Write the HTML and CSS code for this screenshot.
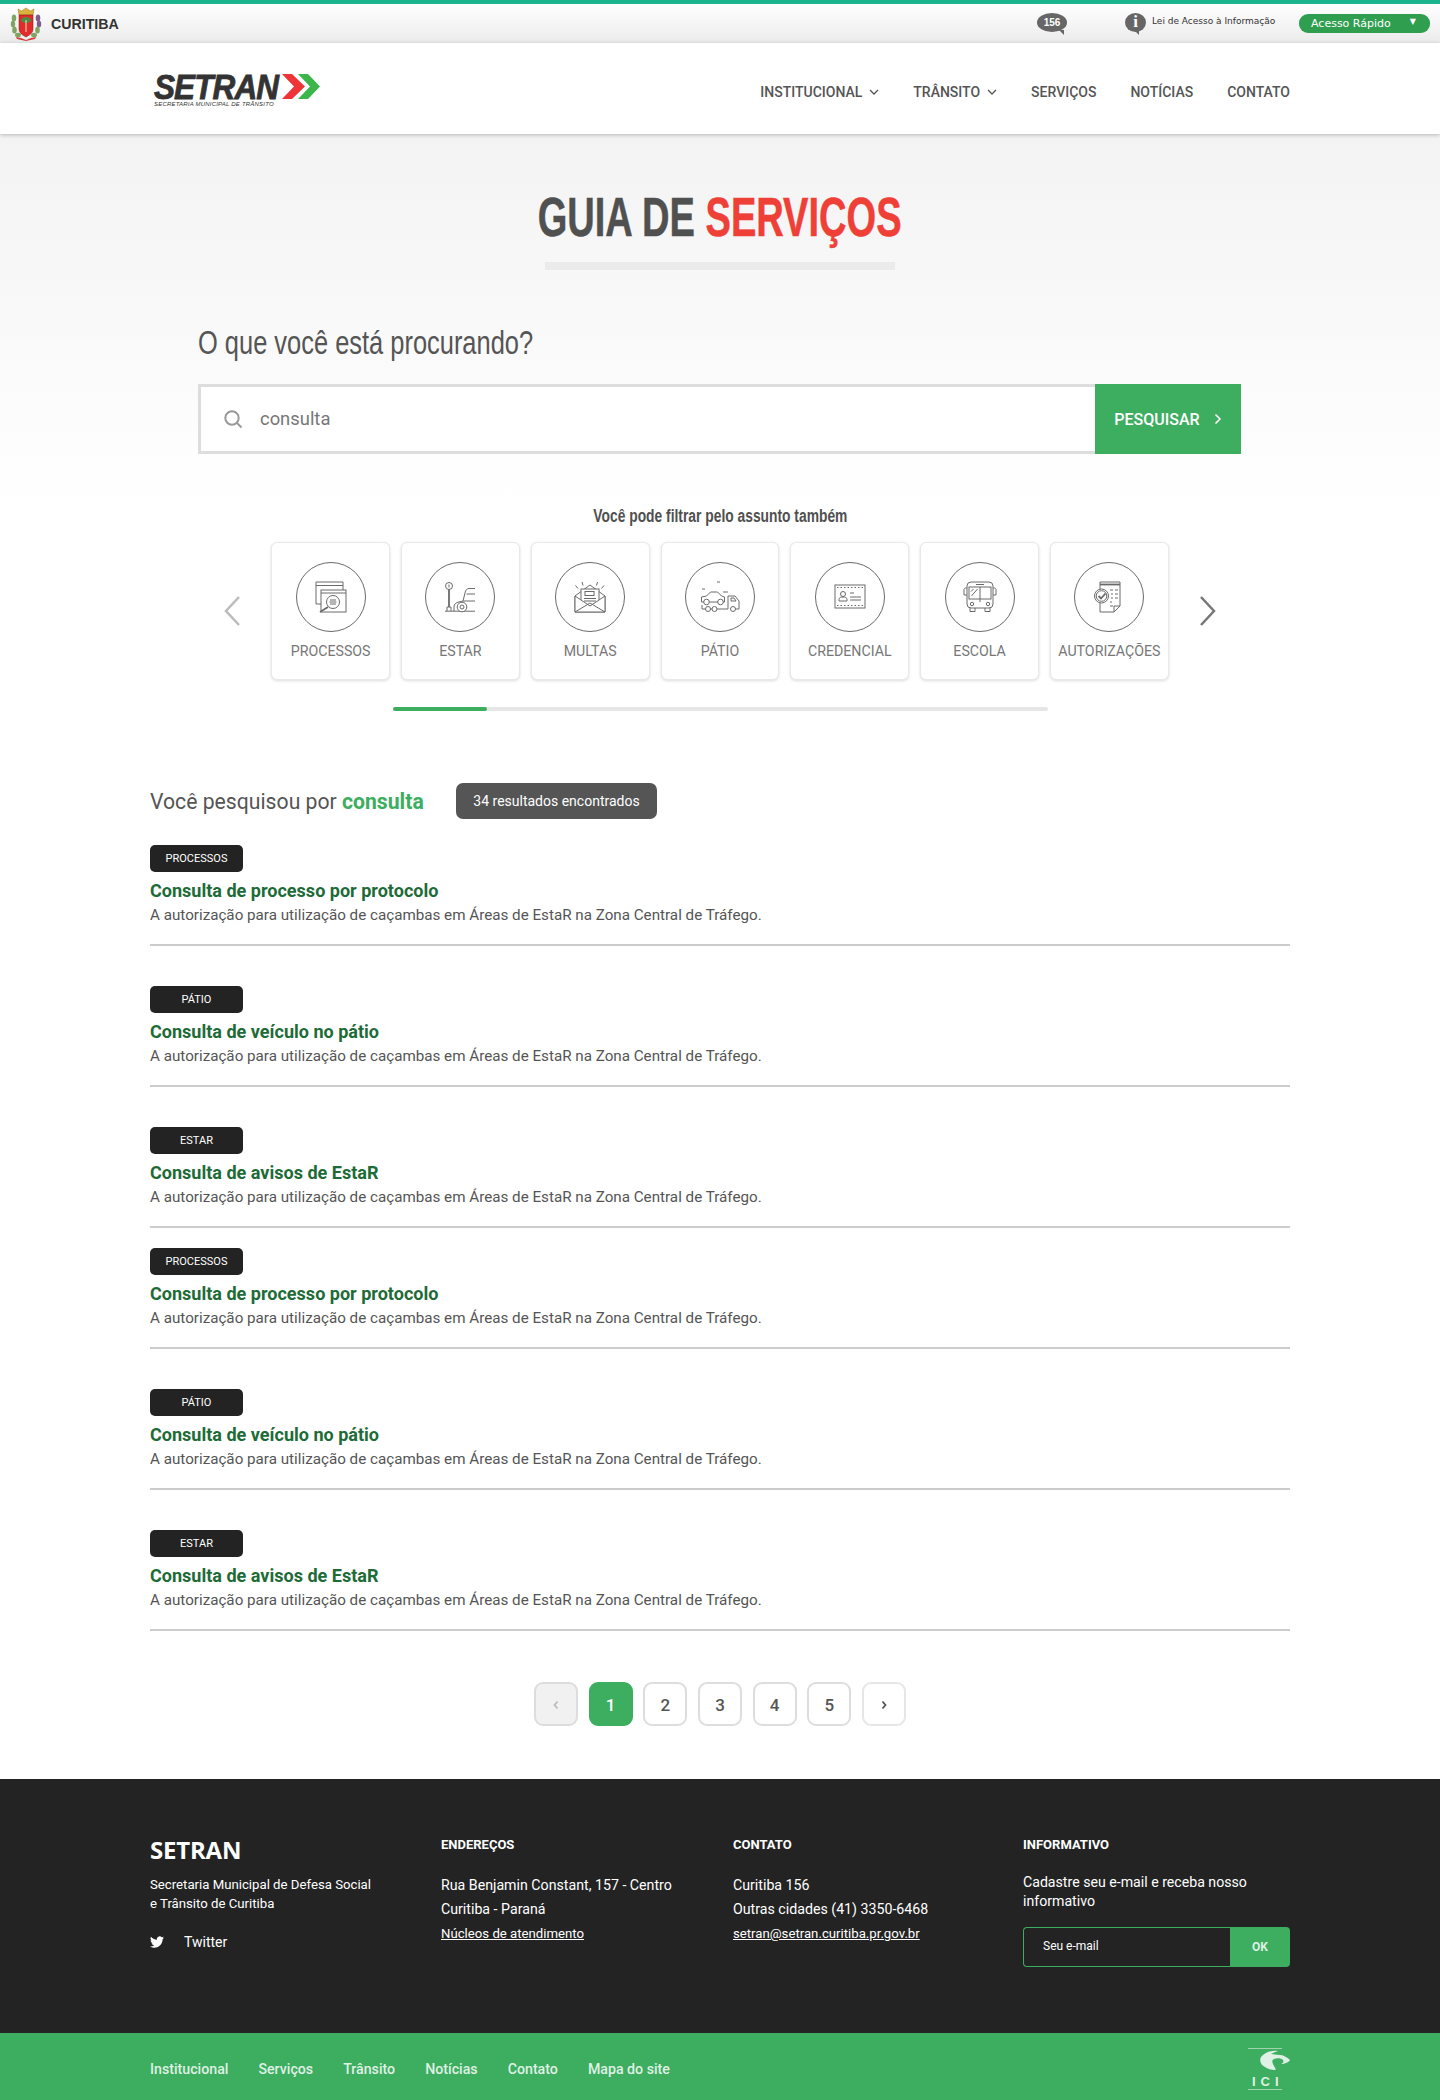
FILE: index.html
```html
<!DOCTYPE html>
<html lang="pt-BR">
<head>
<meta charset="utf-8">
<title>Guia de Serviços - SETRAN</title>
<link rel="stylesheet" href="styles.css">
</head>
<body>
<header class="topbar">
  <a class="city">
    <svg class="crest" viewBox="0 0 32 34" width="32" height="34">
      <path d="M9 8 8 2l3.500 2L16 1l4.500 3L24 2l-1 6z" fill="#d9b33a" stroke="#8a7426" stroke-width=".5"/>
      <g fill="#7fa565"><ellipse cx="4" cy="11" rx="2.300" ry="3.500"/><ellipse cx="3" cy="17" rx="2.200" ry="3.500"/><ellipse cx="4.500" cy="23" rx="2.300" ry="3.500"/><ellipse cx="8" cy="28" rx="3" ry="2.200"/></g>
      <g fill="#7d5c8c"><ellipse cx="28" cy="11" rx="2.300" ry="3.500"/><ellipse cx="29" cy="17" rx="2.200" ry="3.500"/></g>
      <g fill="#7fa565"><ellipse cx="27.500" cy="23" rx="2.300" ry="3.500"/><ellipse cx="24" cy="28" rx="3" ry="2.200"/></g>
      <path d="M9 8h14v14c0 4-3.500 6-7 8-3.500-2-7-4-7-8z" fill="#e32b2b" stroke="#7a1717" stroke-width=".5"/>
      <ellipse cx="16" cy="13" rx="5" ry="3" fill="#4d8a45"/>
      <path d="M15.500 13h1v12h-1z" fill="#f3e6c0"/>
      <path d="M6 30l5 1 5 2 5-2 5-1-1 2-9 2-9-2z" fill="#d83a3a"/>
    </svg>
    <span class="city-name">CURITIBA</span>
  </a>
  <div class="top-tools">
    <span class="bubble bubble-156">156</span>
    <span class="bubble bubble-info">i</span>
    <span class="lai">Lei de Acesso à Informação</span>
    <span class="quick"><span>Acesso Rápido</span><span class="quick-caret">▼</span></span>
  </div>
</header>

<nav class="navbar">
  <div class="container nav-inner">
    <a class="logo">
      <span class="logo-row">
        <span class="logo-word"><span class="logo-text">SETRAN</span></span>
        <svg class="logo-arrows" viewBox="0 0 38 25" width="38" height="25">
          <path d="M16 0h10l12 12.500L26 25H16l12-12.500z" fill="#3cb54a"/>
          <path d="M0 0h10l13 12.500L10 25H0l12-12.500z" fill="#ee3436"/>
        </svg>
      </span>
      <span class="logo-sub">SECRETARIA MUNICIPAL DE TRÂNSITO</span>
    </a>
    <ul class="menu">
      <li>INSTITUCIONAL<svg class="caret" viewBox="0 0 10 6" width="10" height="6"><path d="M1 1l4 4 4-4"/></svg></li>
      <li>TRÂNSITO<svg class="caret" viewBox="0 0 10 6" width="10" height="6"><path d="M1 1l4 4 4-4"/></svg></li>
      <li>SERVIÇOS</li>
      <li>NOTÍCIAS</li>
      <li>CONTATO</li>
    </ul>
  </div>
</nav>

<main>
  <section class="hero">
    <h1 class="page-title"><span class="cond">GUIA DE <em>SERVIÇOS</em></span></h1>
    <div class="title-bar"></div>
    <div class="narrow">
      <h2 class="question"><span class="cond-q">O que você está procurando?</span></h2>
      <form class="search">
        <div class="search-field">
          <svg class="search-icon" viewBox="0 0 20 20" width="20" height="20"><circle cx="9" cy="9" r="6.700"/><path d="M14 14l4.500 4.500"/></svg>
          <span class="search-value">consulta</span>
        </div>
        <button class="search-btn" type="button">PESQUISAR<svg viewBox="0 0 8 12" width="8" height="12"><path d="M1.500 1.500 6 6l-4.500 4.500"/></svg></button>
      </form>
    </div>
    <p class="filter-note"><span class="cond-f">Você pode filtrar pelo assunto também</span></p>
    <div class="carousel">
      <svg class="arrow arrow-prev" viewBox="0 0 16 30" width="16" height="30"><path d="M15 1 2 15l13 14"/></svg>
      <div class="cards">
        <a class="card">
          <svg class="ico" viewBox="0 0 70 70" width="70" height="70"><circle cx="35" cy="35" r="34.500"/>
            <path d="M20 20h27v22H20zM20 23.500h27"/>
            <rect class="w" x="25" y="28" width="25" height="22"/><path d="M25 31h25"/>
            <circle class="w" cx="37" cy="40" r="6.500"/><path d="M34 38h6M33.500 40h7M34 42h6"/>
            <path class="t" d="M32 45l-8 5"/></svg>
          <span>PROCESSOS</span>
        </a>
        <a class="card">
          <svg class="ico" viewBox="0 0 70 70" width="70" height="70"><circle cx="35" cy="35" r="34.500"/>
            <circle cx="24" cy="24" r="3.500"/><path d="M24 22.500v3"/>
            <path class="t" d="M24 27.500V45"/><path d="M22 49v-4h4v4M20 49.200h30"/>
            <path d="M29 49v-4c0-3 2-4.500 5-5l4-1 2-8c.5-3 2-4.500 4-4.500h6M38 39h12M41.500 32H50"/>
            <circle class="w" cx="37" cy="45" r="4.800"/><circle cx="37" cy="45" r="2"/></svg>
          <span>ESTAR</span>
        </a>
        <a class="card">
          <svg class="ico" viewBox="0 0 70 70" width="70" height="70"><circle cx="35" cy="35" r="34.500"/>
            <path d="M20 34l15-11 15 11v16H20z"/>
            <rect class="w" x="26" y="27" width="18" height="17"/><rect x="30" y="29.500" width="9" height="4"/>
            <path d="M29 36.500h12M29 39h12"/>
            <path class="w" d="M20 34l15 10 15-10v16H20z"/><path d="M20 50l15-9 15 9"/>
            <path d="M20.500 23.500l2.500 3M27 20l1 3.500M42.500 20l-1 3.500M49 23.500l-2.500 3"/></svg>
          <span>MULTAS</span>
        </a>
        <a class="card">
          <svg class="ico" viewBox="0 0 70 70" width="70" height="70"><circle cx="35" cy="35" r="34.500"/>
            <path d="M32 20h3M17 27h3M38 30h5"/>
            <path d="M16.500 40v-5l5-1 4-4h7l4 4 3 1v5z"/>
            <circle class="w" cx="21.500" cy="40" r="2.800"/><circle class="w" cx="35.500" cy="40" r="2.800"/>
            <path d="M43 45V34h7l4 5v8h-4M17 43v4h26v-2"/>
            <path d="M46 36h3l2 3h-5z"/>
            <circle class="w" cx="23" cy="47" r="2.500"/><circle class="w" cx="29.500" cy="47" r="2.500"/><circle class="w" cx="48" cy="47" r="2.500"/></svg>
          <span>PÁTIO</span>
        </a>
        <a class="card">
          <svg class="ico" viewBox="0 0 70 70" width="70" height="70"><circle cx="35" cy="35" r="34.500"/>
            <rect x="20" y="23" width="30" height="23"/><path class="d" d="M22 25.500h26M22 43.500h26"/>
            <circle cx="28" cy="32" r="2.500"/><path d="M24 39v-1.500c0-2 2-2.500 4-2.500s4 .5 4 2.500V39z"/>
            <path d="M35 31h4M35 35h11M35 38h11"/></svg>
          <span>CREDENCIAL</span>
        </a>
        <a class="card">
          <svg class="ico" viewBox="0 0 70 70" width="70" height="70"><circle cx="35" cy="35" r="34.500"/>
            <rect x="22" y="20" width="26" height="26" rx="4"/><rect x="24" y="25" width="22" height="12"/>
            <path d="M35 25v15M26.500 34l6-7M26 29.500l2.500-2.500M31 22.500h8"/>
            <path d="M22 26h-1.500c-1 0-1.500 1-1.500 2v5h3M48 26h1.500c1 0 1.500 1 1.500 2v5h-3"/>
            <circle cx="27" cy="42" r="1.700"/><circle cx="43" cy="42" r="1.700"/>
            <path d="M25 46v3.500h5V46M40 46v3.500h5V46"/></svg>
          <span>ESCOLA</span>
        </a>
        <a class="card">
          <svg class="ico" viewBox="0 0 70 70" width="70" height="70"><circle cx="35" cy="35" r="34.500"/>
            <path d="M26 20h20v24l-6 6H26z"/><path class="t" d="M26 22.500h20"/><path d="M46 44h-6v6"/>
            <path d="M36 28h3M41 28h3M37 32h2M41 32h3M37 36h2M41 36h3M36 40h2M36 44h3"/>
            <circle class="w" cx="27.500" cy="34" r="7"/><circle cx="27.500" cy="34" r="5.300"/>
            <path class="t" d="M24.500 34l2.500 2.500 4.500-5"/></svg>
          <span>AUTORIZAÇÕES</span>
        </a>
      </div>
      <svg class="arrow arrow-next" viewBox="0 0 16 30" width="16" height="30"><path d="M1 1l13 14L1 29"/></svg>
    </div>
    <div class="track"><div class="thumb"></div></div>
  </section>

  <section class="container results">
    <header class="results-head">
      <h3 class="searched">Você pesquisou por <strong>consulta</strong></h3>
      <span class="count">34 resultados encontrados</span>
    </header>

    <div class="group">
      <article class="result">
        <span class="tag">PROCESSOS</span>
        <h4>Consulta de processo por protocolo</h4>
        <p>A autorização para utilização de caçambas em Áreas de EstaR na Zona Central de Tráfego.</p>
      </article>
      <article class="result">
        <span class="tag">PÁTIO</span>
        <h4>Consulta de veículo no pátio</h4>
        <p>A autorização para utilização de caçambas em Áreas de EstaR na Zona Central de Tráfego.</p>
      </article>
      <article class="result">
        <span class="tag">ESTAR</span>
        <h4>Consulta de avisos de EstaR</h4>
        <p>A autorização para utilização de caçambas em Áreas de EstaR na Zona Central de Tráfego.</p>
      </article>
    </div>
    <div class="group">
      <article class="result">
        <span class="tag">PROCESSOS</span>
        <h4>Consulta de processo por protocolo</h4>
        <p>A autorização para utilização de caçambas em Áreas de EstaR na Zona Central de Tráfego.</p>
      </article>
      <article class="result">
        <span class="tag">PÁTIO</span>
        <h4>Consulta de veículo no pátio</h4>
        <p>A autorização para utilização de caçambas em Áreas de EstaR na Zona Central de Tráfego.</p>
      </article>
      <article class="result">
        <span class="tag">ESTAR</span>
        <h4>Consulta de avisos de EstaR</h4>
        <p>A autorização para utilização de caçambas em Áreas de EstaR na Zona Central de Tráfego.</p>
      </article>
    </div>

    <div class="pager">
      <a class="page page-off"><svg viewBox="0 0 8 10" width="8" height="10"><path d="M5.500 1.500 2.500 5l3 3.500"/></svg></a>
      <a class="page page-on">1</a>
      <a class="page">2</a>
      <a class="page">3</a>
      <a class="page">4</a>
      <a class="page">5</a>
      <a class="page page-next"><svg viewBox="0 0 8 10" width="8" height="10"><path d="M2.500 1.500 5.500 5l-3 3.500"/></svg></a>
    </div>
  </section>
</main>

<footer>
  <div class="foot-dark">
    <div class="container foot-grid">
      <div class="foot-col">
        <div class="foot-brand">SETRAN</div>
        <p class="foot-desc">Secretaria Municipal de Defesa Social<br>e Trânsito de Curitiba</p>
        <a class="tw"><svg viewBox="0 0 24 24" width="14" height="14"><path d="M23.953 4.570a10 10 0 01-2.825.775 4.958 4.958 0 002.163-2.723c-.951.555-2.005.959-3.127 1.184a4.920 4.920 0 00-8.384 4.482C7.690 8.095 4.067 6.130 1.640 3.162a4.822 4.822 0 00-.666 2.475c0 1.710.870 3.213 2.188 4.096a4.904 4.904 0 01-2.228-.616v.060a4.923 4.923 0 003.946 4.827 4.996 4.996 0 01-2.212.085 4.936 4.936 0 004.604 3.417 9.867 9.867 0 01-6.102 2.105c-.390 0-.779-.023-1.170-.067a13.995 13.995 0 007.557 2.209c9.053 0 13.998-7.496 13.998-13.985 0-.210 0-.420-.015-.630A9.935 9.935 0 0024 4.590z"/></svg><span>Twitter</span></a>
      </div>
      <div class="foot-col">
        <h5>ENDEREÇOS</h5>
        <p class="foot-line">Rua Benjamin Constant, 157 - Centro</p>
        <p class="foot-line">Curitiba - Paraná</p>
        <a class="foot-link">Núcleos de atendimento</a>
      </div>
      <div class="foot-col">
        <h5>CONTATO</h5>
        <p class="foot-line">Curitiba 156</p>
        <p class="foot-line">Outras cidades (41) 3350-6468</p>
        <a class="foot-link">setran@setran.curitiba.pr.gov.br</a>
      </div>
      <div class="foot-col">
        <h5>INFORMATIVO</h5>
        <p class="foot-news">Cadastre seu e-mail e receba nosso informativo</p>
        <form class="news">
          <div class="news-field">Seu e-mail</div>
          <button class="news-btn" type="button">OK</button>
        </form>
      </div>
    </div>
  </div>
  <div class="foot-green">
    <div class="container green-inner">
      <ul class="foot-menu">
        <li>Institucional</li><li>Serviços</li><li>Trânsito</li><li>Notícias</li><li>Contato</li><li>Mapa do site</li>
      </ul>
      <a class="ici">
        <svg viewBox="0 0 42 26" width="42" height="26"><path d="M0 .5h34" class="ici-line"/>
          <path d="M30 3c-3 1-5 2-7 3 3 0 5 1 9 1 3 0 7 2 10 5-1 2-5 4-9 4 2-1 3-2 2-4-2-2-6-2-9-1-2 1-2 3-1 5 1 3 4 5 2 6-2 .500-7-1-10-3-4-2-6-6-4-10 3-4 9-7 17-6z" fill="#dff0e4"/></svg>
        <span>ICI</span>
      </a>
    </div>
  </div>
</footer>
</body>
</html>
```
FILE: styles.css
```css
* { box-sizing: border-box; }
html, body { margin: 0; padding: 0; }
body { background: #fff; color: #555; font-family: Roboto, "Liberation Sans", sans-serif; width: 1440px; }
h1, h2, h3, h4, h5, p, ul { margin: 0; padding: 0; }
ul { list-style: none; }
.container { width: 1140px; margin: 0 auto; }

.topbar { height: 43px; border-top: 4px solid #1eb48e; background: linear-gradient(#fff, #ebebeb); display: flex; justify-content: space-between; align-items: center; padding: 0 10px; }
.city { display: flex; align-items: center; gap: 9px; margin-top: 1px; }
.crest { display: block; }
.city-name { font: 700 14.200px "Liberation Sans", sans-serif; color: #333; }
.top-tools { display: flex; align-items: center; }
.bubble { position: relative; display: flex; align-items: center; justify-content: center; background: #666; color: #fff; font-family: "Liberation Sans", sans-serif; font-weight: 700; border-radius: 50%; }
.bubble::after { content: ""; position: absolute; right: 3px; bottom: -3px; border-top: 5px solid #666; border-left: 5px solid transparent; }
.bubble-156 { width: 30px; height: 19px; font-size: 10px; margin-right: 58px; margin-top: -3px; }
.bubble-info { width: 21px; height: 19px; font-size: 17px; font-family: "Liberation Serif", serif; margin-right: 6px; margin-top: -3px; }
.bubble-info::after { right: 7px; }
.lai { width: 124px; margin-right: 23px; font: 9px/12px "DejaVu Sans", sans-serif; white-space: nowrap; color: #333; margin-top: -6px; }
.quick { width: 131px; height: 19px; margin-top: -1px; background: #2f9e4f; border-radius: 9px; color: #fff; font: 11px/19px "DejaVu Sans", sans-serif; display: flex; justify-content: space-between; padding: 0 14px 0 12px; }
.quick-caret { font-size: 8px; line-height: 15px; }

.navbar { height: 91px; background: #fff; box-shadow: 0 1px 4px rgba(0, 0, 0, .25); position: relative; }
.nav-inner { height: 100%; display: flex; justify-content: space-between; }
.logo { margin: 31px 0 0 4px; display: block; color: #333; }
.logo-row { display: flex; height: 25px; }
.logo-word { width: 128px; height: 25px; overflow: visible; }
.logo-text { display: block; font: italic 700 35px/25px "Liberation Sans", sans-serif; letter-spacing: -1px; transform: scaleX(.9); transform-origin: 0 0; color: #333; -webkit-text-stroke: .8px #333; }
.logo-sub { display: block; margin-top: 2px; font: italic 400 6px/7px "Liberation Sans", sans-serif; letter-spacing: .2px; white-space: nowrap; }
.menu { display: flex; gap: 34px; height: 100%; align-items: center; font-size: 14px; font-weight: 500; color: #555; padding-top: 6px; }
.menu li { display: flex; align-items: center; white-space: nowrap; }
.caret { margin-left: 7px; fill: none; stroke: #555; stroke-width: 1.300; }

.hero { height: 600px; padding-top: 43px; background: linear-gradient(#f3f3f3, #fff 62%); }
.page-title { font: 700 56px/80px "Liberation Sans Narrow", "Liberation Sans", sans-serif; text-align: center; color: #505050; height: 80px; }
.cond { display: inline-block; transform: scaleX(.68); white-space: nowrap; -webkit-text-stroke: .5px; }
.page-title em { font-style: normal; color: #ee4036; }
.title-bar { width: 350px; height: 8px; background: #ebebeb; margin: 5px auto 0; }
.narrow { width: 1043px; margin: 52px 0 0 198px; }
.question { font: 400 34px/40px "Liberation Sans Narrow", "Liberation Sans", sans-serif; color: #555; height: 40px; }
.cond-q { display: inline-block; transform: scaleX(.748); transform-origin: 0 50%; white-space: nowrap; }
.search { display: flex; height: 70px; margin-top: 22px; }
.search-field { flex: 1; display: flex; align-items: center; border: 3px solid #ddd; border-right: 0; background: #fff; padding-left: 22px; }
.search-icon { fill: none; stroke: #999; stroke-width: 2; }
.search-value { margin-left: 17px; font-size: 18.400px; color: #777; margin-top: -1px; }
.search-btn { width: 146px; border: 0; background: #3dad5f; color: #fff; font: 500 16px Roboto, sans-serif; display: flex; align-items: center; justify-content: center; gap: 14px; padding: 0; }
.search-btn svg { fill: none; stroke: #fff; stroke-width: 1.500; }
.filter-note { margin-top: 50px; height: 24px; text-align: center; font: 700 18px/24px "Liberation Sans Narrow", "Liberation Sans", sans-serif; color: #505050; }
.cond-f { display: inline-block; transform: scaleX(.768); white-space: nowrap; }
.carousel { width: 992px; margin: 14px auto 0; height: 138px; display: flex; justify-content: space-between; align-items: center; }
.arrow { fill: none; stroke-width: 2.500; }
.arrow-prev { stroke: #bbb; }
.arrow-next { stroke: #777; }
.cards { display: flex; gap: 11px; }
.card { width: 118.800px; height: 138px; background: #fff; border: 1px solid #e9e9e9; border-radius: 6px; box-shadow: 0 1px 3px rgba(0, 0, 0, .14); display: flex; flex-direction: column; align-items: center; padding-top: 19px; font-size: 14.200px; color: #777; white-space: nowrap; }
.card span { margin-top: 10px; line-height: 18px; }
.ico { fill: none; stroke: #6a6a6a; stroke-width: 1; display: block; flex: none; }
.ico .w { fill: #fff; }
.ico .t { stroke-width: 1.800; }
.ico .d { stroke-dasharray: 1.500 2; }
.track { width: 655px; height: 4px; margin: 27px auto 0; border-radius: 2px; background: #e6e6e6; }
.thumb { width: 94px; height: 4px; border-radius: 2px; background: #3dad5f; }

.results { padding-top: 49px; }
.results-head { display: flex; align-items: center; height: 36px; }
.searched { font-size: 21.200px; line-height: 38px; padding-top: 1px; font-weight: 400; color: #555; width: 306px; white-space: nowrap; }
.searched strong { font-weight: 700; color: #3dad5f; }
.count { width: 201px; height: 36px; border-radius: 7px; background: #555; color: #fff; font-size: 14px; line-height: 37px; text-align: center; white-space: nowrap; }
.group { margin-top: 20px; }
.group:first-of-type { margin-top: 26px; }
.result { border-bottom: 2px solid #ccc; padding-bottom: 19px; }
.result + .result { margin-top: 40px; }
.tag { display: block; width: 93px; height: 27px; border-radius: 5px; background: #232323; color: #fff; font-size: 11px; line-height: 28px; text-align: center; }
.result h4 { margin-top: 7px; font-size: 18.050px; line-height: 24px; font-weight: 700; color: #1d6b37; }
.result p { margin-top: 2px; font-size: 15.200px; line-height: 20px; color: #555; white-space: nowrap; }
.pager { display: flex; justify-content: center; gap: 10.670px; margin-top: 51px; padding-bottom: 53px; }
.page { width: 44px; height: 44px; border: 2px solid #ddd; border-radius: 9px; display: flex; align-items: center; justify-content: center; font-size: 17px; line-height: 20px; padding-top: 1px; font-weight: 500; color: #555; background: #fff; }
.page svg { fill: none; stroke: #555; stroke-width: 1.800; }
.page-off { background: #f1f1f1; }
.page-off svg { stroke: #bbb; }
.page-on { background: #3dad5f; border-color: #3dad5f; color: #fff; }
.page-next { border-color: #e6e6e6; }

.foot-dark { height: 254px; background: #232323; color: #fff; padding-top: 56px; }
.foot-grid { display: grid; grid-template-columns: 291px 292px 290px 267px; }
.foot-brand { font: 700 24px/28px "Open Sans", sans-serif; letter-spacing: -.2px; margin-top: 1px; }
.foot-desc { margin-top: 11px; font-size: 13.200px; line-height: 19px; }
.tw { display: flex; align-items: center; gap: 20px; margin-top: 19px; font-size: 14px; line-height: 20px; }
.tw svg { fill: #fff; }
.foot-col h5 { font-size: 13px; line-height: 20px; font-weight: 700; margin-bottom: 18px; }
.foot-line { font-size: 14.200px; line-height: 24px; }
.foot-link { display: block; font-size: 13.200px; line-height: 26px; text-decoration: underline; }
.foot-news { font-size: 14.150px; line-height: 19px; margin-top: 3px; }
.news { display: flex; height: 40px; margin-top: 16px; }
.news-field { flex: 1; border: 1px solid #3dad5f; border-right: 0; border-radius: 4px 0 0 4px; padding-left: 19px; font-size: 12px; line-height: 37px; }
.news-btn { width: 60px; border: 0; padding: 0; background: #3dad5f; color: #dff0e4; border-radius: 0 4px 4px 0; font: 700 12px Roboto, sans-serif; }
.foot-green { height: 67px; background: #3dad5f; }
.green-inner { height: 100%; display: flex; justify-content: space-between; align-items: center; }
.foot-menu { display: flex; gap: 30px; font-size: 14.200px; font-weight: 500; color: #dff0e4; margin-top: 5px; }
.ici { display: flex; flex-direction: column; align-items: center; width: 42px; margin-top: 4px; color: #dff0e4; font: 700 13px/15px "Liberation Sans", sans-serif; letter-spacing: 5px; }
.ici svg { display: block; }
.ici span { width: 34px; margin-right: 8px; text-align: center; border-bottom: 1px solid #9fd4ae; padding-left: 4px; }
.ici-line { stroke: #9fd4ae; stroke-width: 1; fill: none; }
```
